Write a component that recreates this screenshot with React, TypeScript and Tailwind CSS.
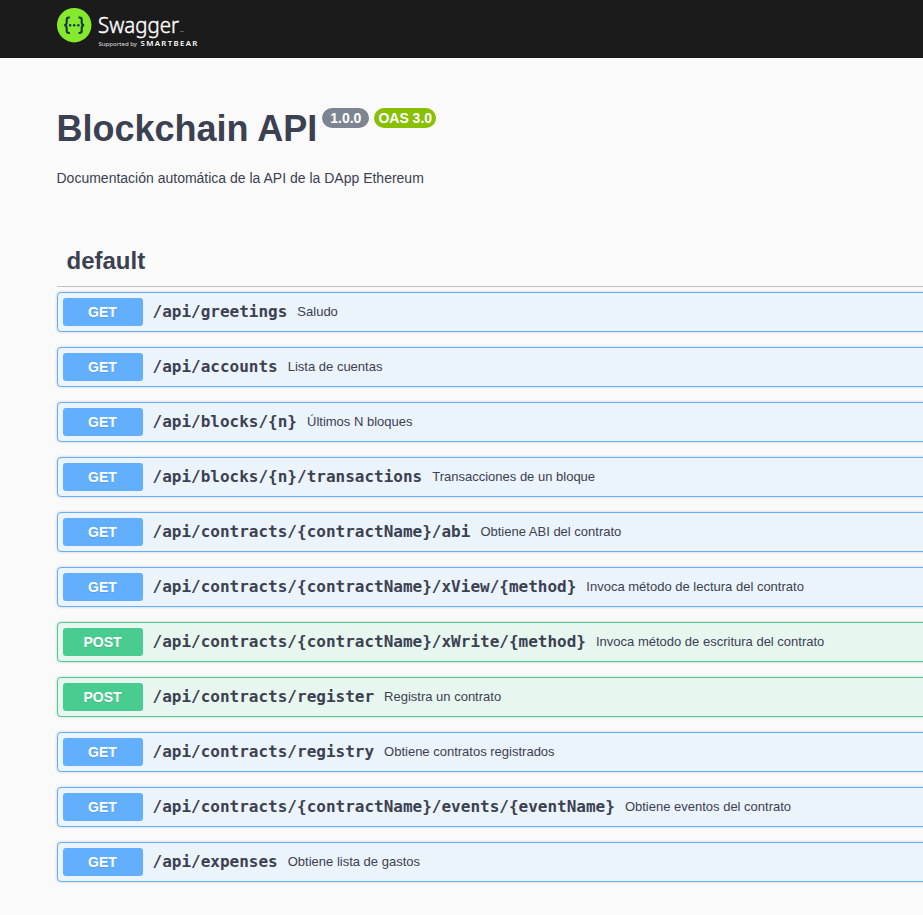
type Method = 'GET' | 'POST';

interface Operation {
  method: Method;
  path: string;
  summary: string;
}

const operations: Operation[] = [
  { method: 'GET', path: '/api/greetings', summary: 'Saludo' },
  { method: 'GET', path: '/api/accounts', summary: 'Lista de cuentas' },
  { method: 'GET', path: '/api/blocks/{n}', summary: 'Últimos N bloques' },
  { method: 'GET', path: '/api/blocks/{n}/transactions', summary: 'Transacciones de un bloque' },
  { method: 'GET', path: '/api/contracts/{contractName}/abi', summary: 'Obtiene ABI del contrato' },
  { method: 'GET', path: '/api/contracts/{contractName}/xView/{method}', summary: 'Invoca método de lectura del contrato' },
  { method: 'POST', path: '/api/contracts/{contractName}/xWrite/{method}', summary: 'Invoca método de escritura del contrato' },
  { method: 'POST', path: '/api/contracts/register', summary: 'Registra un contrato' },
  { method: 'GET', path: '/api/contracts/registry', summary: 'Obtiene contratos registrados' },
  { method: 'GET', path: '/api/contracts/{contractName}/events/{eventName}', summary: 'Obtiene eventos del contrato' },
  { method: 'GET', path: '/api/expenses', summary: 'Obtiene lista de gastos' },
];

const blockStyles: Record<Method, string> = {
  GET: 'border-[#61affe] bg-[#ebf3fb]',
  POST: 'border-[#49cc90] bg-[#e8f6f0]',
};

const badgeStyles: Record<Method, string> = {
  GET: 'bg-[#61affe]',
  POST: 'bg-[#49cc90]',
};

function SwaggerLogo() {
  return (
    <svg width="144" height="42" viewBox="0 0 144 42" aria-label="Swagger">
      <circle cx="17.2" cy="17.2" r="17.2" fill="#85ea2d" />
      <g fill="none" stroke="#173647" strokeWidth="2.1">
        <path d="M12.9 9.5H11.9Q9.7 9.5 9.7 11.7V14.2Q9.7 17.2 7.2 17.2Q9.7 17.2 9.7 20.2V22.8Q9.7 25 11.9 25H12.9" />
        <path d="M21.5 9.5H22.5Q24.7 9.5 24.7 11.7V14.2Q24.7 17.2 27.2 17.2Q24.7 17.2 24.7 20.2V22.8Q24.7 25 22.5 25H21.5" />
      </g>
      <g fill="#173647">
        <circle cx="13.1" cy="17.2" r="1.25" />
        <circle cx="17.2" cy="17.2" r="1.25" />
        <circle cx="21.3" cy="17.2" r="1.25" />
      </g>
      <g fill="#fff" className="font-['Noto_Sans',sans-serif]">
        <text x="41" y="24.6" fontSize="22" fontWeight="300" stroke="#fff" strokeWidth="0.45" textLength="81" lengthAdjust="spacingAndGlyphs">Swagger</text>
        <text x="122.9" y="24.4" fontSize="2.4" opacity="0.8">TM</text>
        <text x="41.4" y="38" fontSize="5.8" opacity="0.85" textLength="38.6" lengthAdjust="spacingAndGlyphs">Supported by</text>
        <text x="83.5" y="38" fontSize="7.8" fontWeight="600" textLength="56.8" lengthAdjust="spacing">SMARTBEAR</text>
      </g>
    </svg>
  );
}

function OperationRow({ method, path, summary }: Operation) {
  return (
    <div className={`flex h-10 items-center rounded border px-[5px] shadow-[0_0_3px_rgba(0,0,0,0.19)] ${blockStyles[method]}`}>
      <span className={`h-7 w-20 shrink-0 rounded-[3px] text-center text-sm leading-7 font-bold text-white [text-shadow:0_1px_0_rgba(0,0,0,0.1)] ${badgeStyles[method]}`}>
        {method}
      </span>
      <span className="px-2.5 font-['DejaVu_Sans_Mono',monospace] text-base leading-5 font-semibold whitespace-nowrap">{path}</span>
      <span className="text-[13px] leading-4 whitespace-nowrap">{summary}</span>
    </div>
  );
}

export default function App() {
  return (
    <div className="h-[915px] overflow-hidden bg-[#fafafa] font-['Liberation_Sans',Arial,sans-serif] text-[#3b4151]">
      <header className="h-[58px] bg-[#1b1b1b] pt-2 pl-[57px]">
        <SwaggerLogo />
      </header>
      <main className="-mr-5 pl-[56.5px]">
        <div className="flex items-start pt-[50px]">
          <h1 className="text-4xl leading-[42px] font-bold whitespace-nowrap">Blockchain API</h1>
          <span className="ml-[5px] h-5 rounded-full bg-[#7d8492] px-2 text-sm leading-5 font-bold text-white">1.0.0</span>
          <span className="ml-[5px] h-5 rounded-full bg-[#89bf04] px-1 text-sm leading-5 font-bold text-white">OAS 3.0</span>
        </div>
        <p className="mt-5 text-sm leading-4">Documentación automática de la API de la DApp Ethereum</p>
        <section className="mt-[50px]">
          <h2 className="mb-[5px] flex h-[51px] items-center border-b border-[rgba(59,65,81,0.3)] pl-2.5 text-2xl font-bold">default</h2>
          <div className="flex flex-col gap-[15px]">
            {operations.map((op) => (
              <OperationRow key={op.path} {...op} />
            ))}
          </div>
        </section>
      </main>
    </div>
  );
}
